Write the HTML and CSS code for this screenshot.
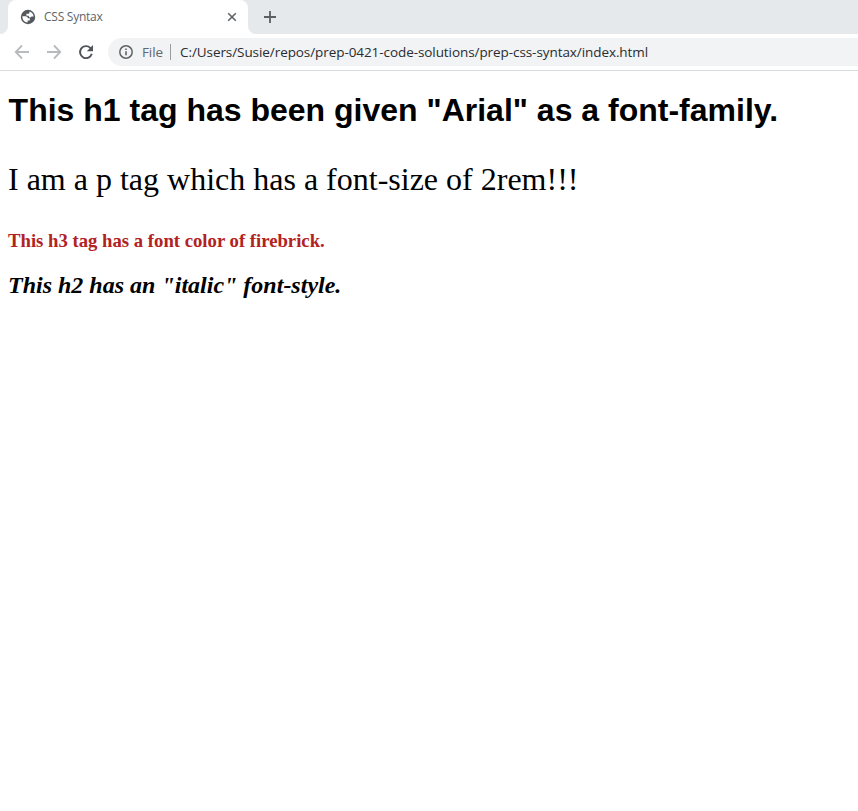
FILE: index.html
```html
<!DOCTYPE html>
<html lang="en">
<head>
<meta charset="utf-8">
<title>CSS Syntax</title>
<link rel="stylesheet" href="styles.css">
</head>
<body>
<header>
  <div class="tabstrip">
    <div class="edge left"></div>
    <div class="tab">
      <svg class="globe" width="16" height="16" viewBox="0 0 16 16"><circle cx="8" cy="8" r="7.2" fill="#55585c"/><path d="M2.3 7.2H5.6Q7.8 7.4 7.9 9.2H9.8V11.4H7.6V13.6Q2.5 13.2 2.3 7.2ZM9.6 2.6Q12.9 3.6 13.7 7.4H11.4Q10.8 9.2 9.3 8.2L8.6 6.8H6.4V4.8H8.8Q9.7 4.2 9.6 2.6Z" fill="#fff"/></svg>
      <span class="title">CSS Syntax</span>
      <svg class="close" width="10" height="10" viewBox="0 0 10 10"><path d="m1.2 1.2 7.6 7.6m0-7.6-7.6 7.6" stroke="#5f6368" stroke-width="1.6"/></svg>
    </div>
    <div class="edge right"></div>
    <svg class="plus" width="14" height="14" viewBox="0 0 14 14"><path d="M7 1v12M1 7h12" stroke="#5b5e62" stroke-width="1.8"/></svg>
  </div>
  <div class="toolbar">
    <svg class="nav" width="16" height="16" viewBox="0 0 16 16"><path d="M15 8H2M8 1.5 1.7 8 8 14.5" fill="none" stroke="#b8babc" stroke-width="1.8"/></svg>
    <svg class="nav" width="16" height="16" viewBox="0 0 16 16"><path d="M1 8h13M8 1.5 14.3 8 8 14.5" fill="none" stroke="#b8babc" stroke-width="1.8"/></svg>
    <svg class="nav" width="16" height="16" viewBox="0 0 16 16"><path d="M13.8 9.8A6 6 0 1 1 12.3 3.9L13.4 5" fill="none" stroke="#505357" stroke-width="1.9"/><path d="M15 1v6.2H8.8Z" fill="#505357"/></svg>
    <div class="address">
      <svg width="16" height="16" viewBox="0 0 16 16"><circle cx="8" cy="8" r="6.2" fill="none" stroke="#5f6368" stroke-width="1.5"/><path d="M8 7.2v4.1M8 4.5v1.6" stroke="#5f6368" stroke-width="1.6"/></svg>
      <span class="scheme">File</span>
      <span class="divider"></span>
      <span class="url">C:/Users/Susie/repos/prep-0421-code-solutions/prep-css-syntax/index.html</span>
    </div>
  </div>
</header>
<main>
  <h1>This h1 tag has been given "Arial" as a font-family.</h1>
  <p>I am a p tag which has a font-size of 2rem!!!</p>
  <h3>This h3 tag has a font color of firebrick.</h3>
  <h2>This h2 has an "italic" font-style.</h2>
</main>
</body>
</html>
```
FILE: styles.css
```css
body {
  margin: 0;
  background: #fff;
  color: #000;
  font-family: "Liberation Serif", serif;
  overflow: hidden;
}
header {
  font-family: "Open Sans", sans-serif;
  background: #fff;
  border-bottom: 1px solid #d9dbdd;
}
.tabstrip {
  display: flex;
  align-items: center;
  height: 34px;
  background: linear-gradient(#fff, #fff) 0 0 / 256px 34px no-repeat #e6e9ec;
}
.edge {
  width: 8px;
  height: 34px;
  background: #e6e9ec;
}
.left { border-bottom-right-radius: 8px; }
.right { border-bottom-left-radius: 8px; }
.tab {
  display: flex;
  align-items: center;
  box-sizing: border-box;
  width: 240px;
  height: 34px;
  padding: 0 11px 0 12px;
  background: linear-gradient(#fff, #fff) 0 100% / 100% 20px no-repeat #e6e9ec;
  position: relative;
}
.tab::before {
  content: "";
  position: absolute;
  inset: 0;
  background: #fff;
  border-radius: 8px 8px 0 0;
}
.tab > * { position: relative; }
.title {
  margin-left: 8px;
  color: #606368;
  font-size: 12px;
  line-height: 16px;
  letter-spacing: -0.25px;
  white-space: nowrap;
}
.close { margin-left: auto; }
.plus { margin-left: 7px; }
.toolbar {
  display: flex;
  align-items: center;
  height: 36px;
  padding-left: 14px;
}
.nav {
  flex: none;
  margin-right: 16px;
}
.nav:nth-child(3) { margin-right: 14px; }
.address {
  display: flex;
  align-items: center;
  flex: 1;
  box-sizing: border-box;
  height: 28px;
  padding-left: 10px;
  background: #f1f3f4;
  border-radius: 14px 0 0 14px;
  font-size: 13.5px;
  line-height: 20px;
  white-space: nowrap;
}
.scheme {
  width: 28px;
  margin-left: 8px;
  color: #64676b;
  letter-spacing: -0.1px;
}
.divider {
  width: 1px;
  height: 16px;
  margin-right: 9px;
  background: #9b9ea1;
}
.url {
  color: #292c30;
  letter-spacing: -0.075px;
}
main { padding: 0 8px; }
h1 {
  margin: 21px 0 32px;
  padding-left: 0.6px;
  font: bold 32px/37px "Liberation Sans", Arial, sans-serif;
}
p {
  margin: 32px 0 33px;
  font-size: 32px;
  line-height: 36px;
}
h3 {
  margin: 18.72px 0;
  color: firebrick;
  font-size: 18.72px;
}
h2 {
  margin: 19.92px 0;
  font-size: 24px;
  font-style: italic;
}
```
